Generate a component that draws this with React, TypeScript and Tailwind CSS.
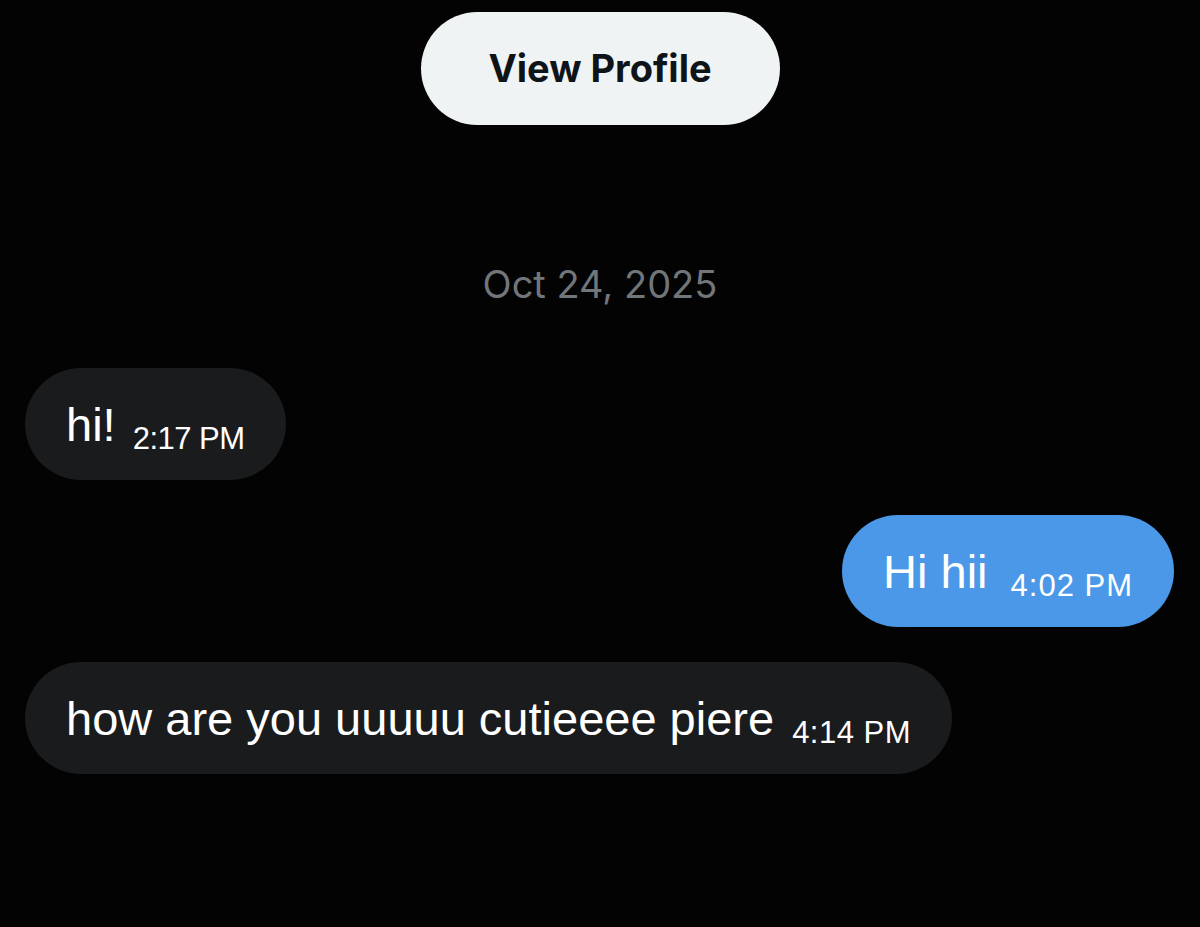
import React from "react";

const sans = { fontFamily: '"Liberation Sans", Arial, sans-serif' };

function Bubble({
  text,
  time,
  mine,
  gap,
  timeCls,
}: {
  text: string;
  time: string;
  mine?: boolean;
  gap: string;
  timeCls: string;
}) {
  return (
    <div className={mine ? "flex justify-end" : "flex justify-start"}>
      <div
        className={
          "h-[112px] rounded-full flex items-center pl-[41px] pr-[41px] " +
          (mine ? "bg-[#4b98e8]" : "bg-[#1a1b1d]")
        }
      >
        <div className={"flex items-baseline text-white " + gap}>
          <span className="text-[47px] leading-none">{text}</span>
          <span className={"text-[31px] leading-none translate-y-[8px] " + timeCls}>{time}</span>
        </div>
      </div>
    </div>
  );
}

export default function App() {
  return (
    <div className="w-[1200px] h-[927px] bg-[#030303] overflow-hidden" style={sans}>
      <div className="flex flex-col items-center pt-[12px]">
        <button
          className="w-[359px] h-[113px] rounded-full bg-[#eff3f4] text-[#0f1419] text-[38px] font-bold"
          style={{ fontFamily: 'Inter, "Liberation Sans", sans-serif' }}
        >
          View Profile
        </button>
        <div
          className="mt-[138px] text-[38px] leading-[42px] text-[#71767b]"
          style={{ fontFamily: 'Inter, "Liberation Sans", sans-serif' }}
        >
          Oct 24, 2025
        </div>
      </div>
      <div className="mt-[63px] pl-[25px] pr-[26px] flex flex-col gap-[35px]">
        <Bubble text="hi!" time="2:17 PM" gap="gap-[17px]" timeCls="tracking-[-0.5px]" />
        <Bubble text="Hi hii" time="4:02 PM" mine gap="gap-[23px]" timeCls="tracking-[1px]" />
        <Bubble
          text="how are you uuuuu cutieeee piere"
          time="4:14 PM"
          gap="gap-[18px]"
          timeCls="tracking-[0.5px]"
        />
      </div>
    </div>
  );
}
